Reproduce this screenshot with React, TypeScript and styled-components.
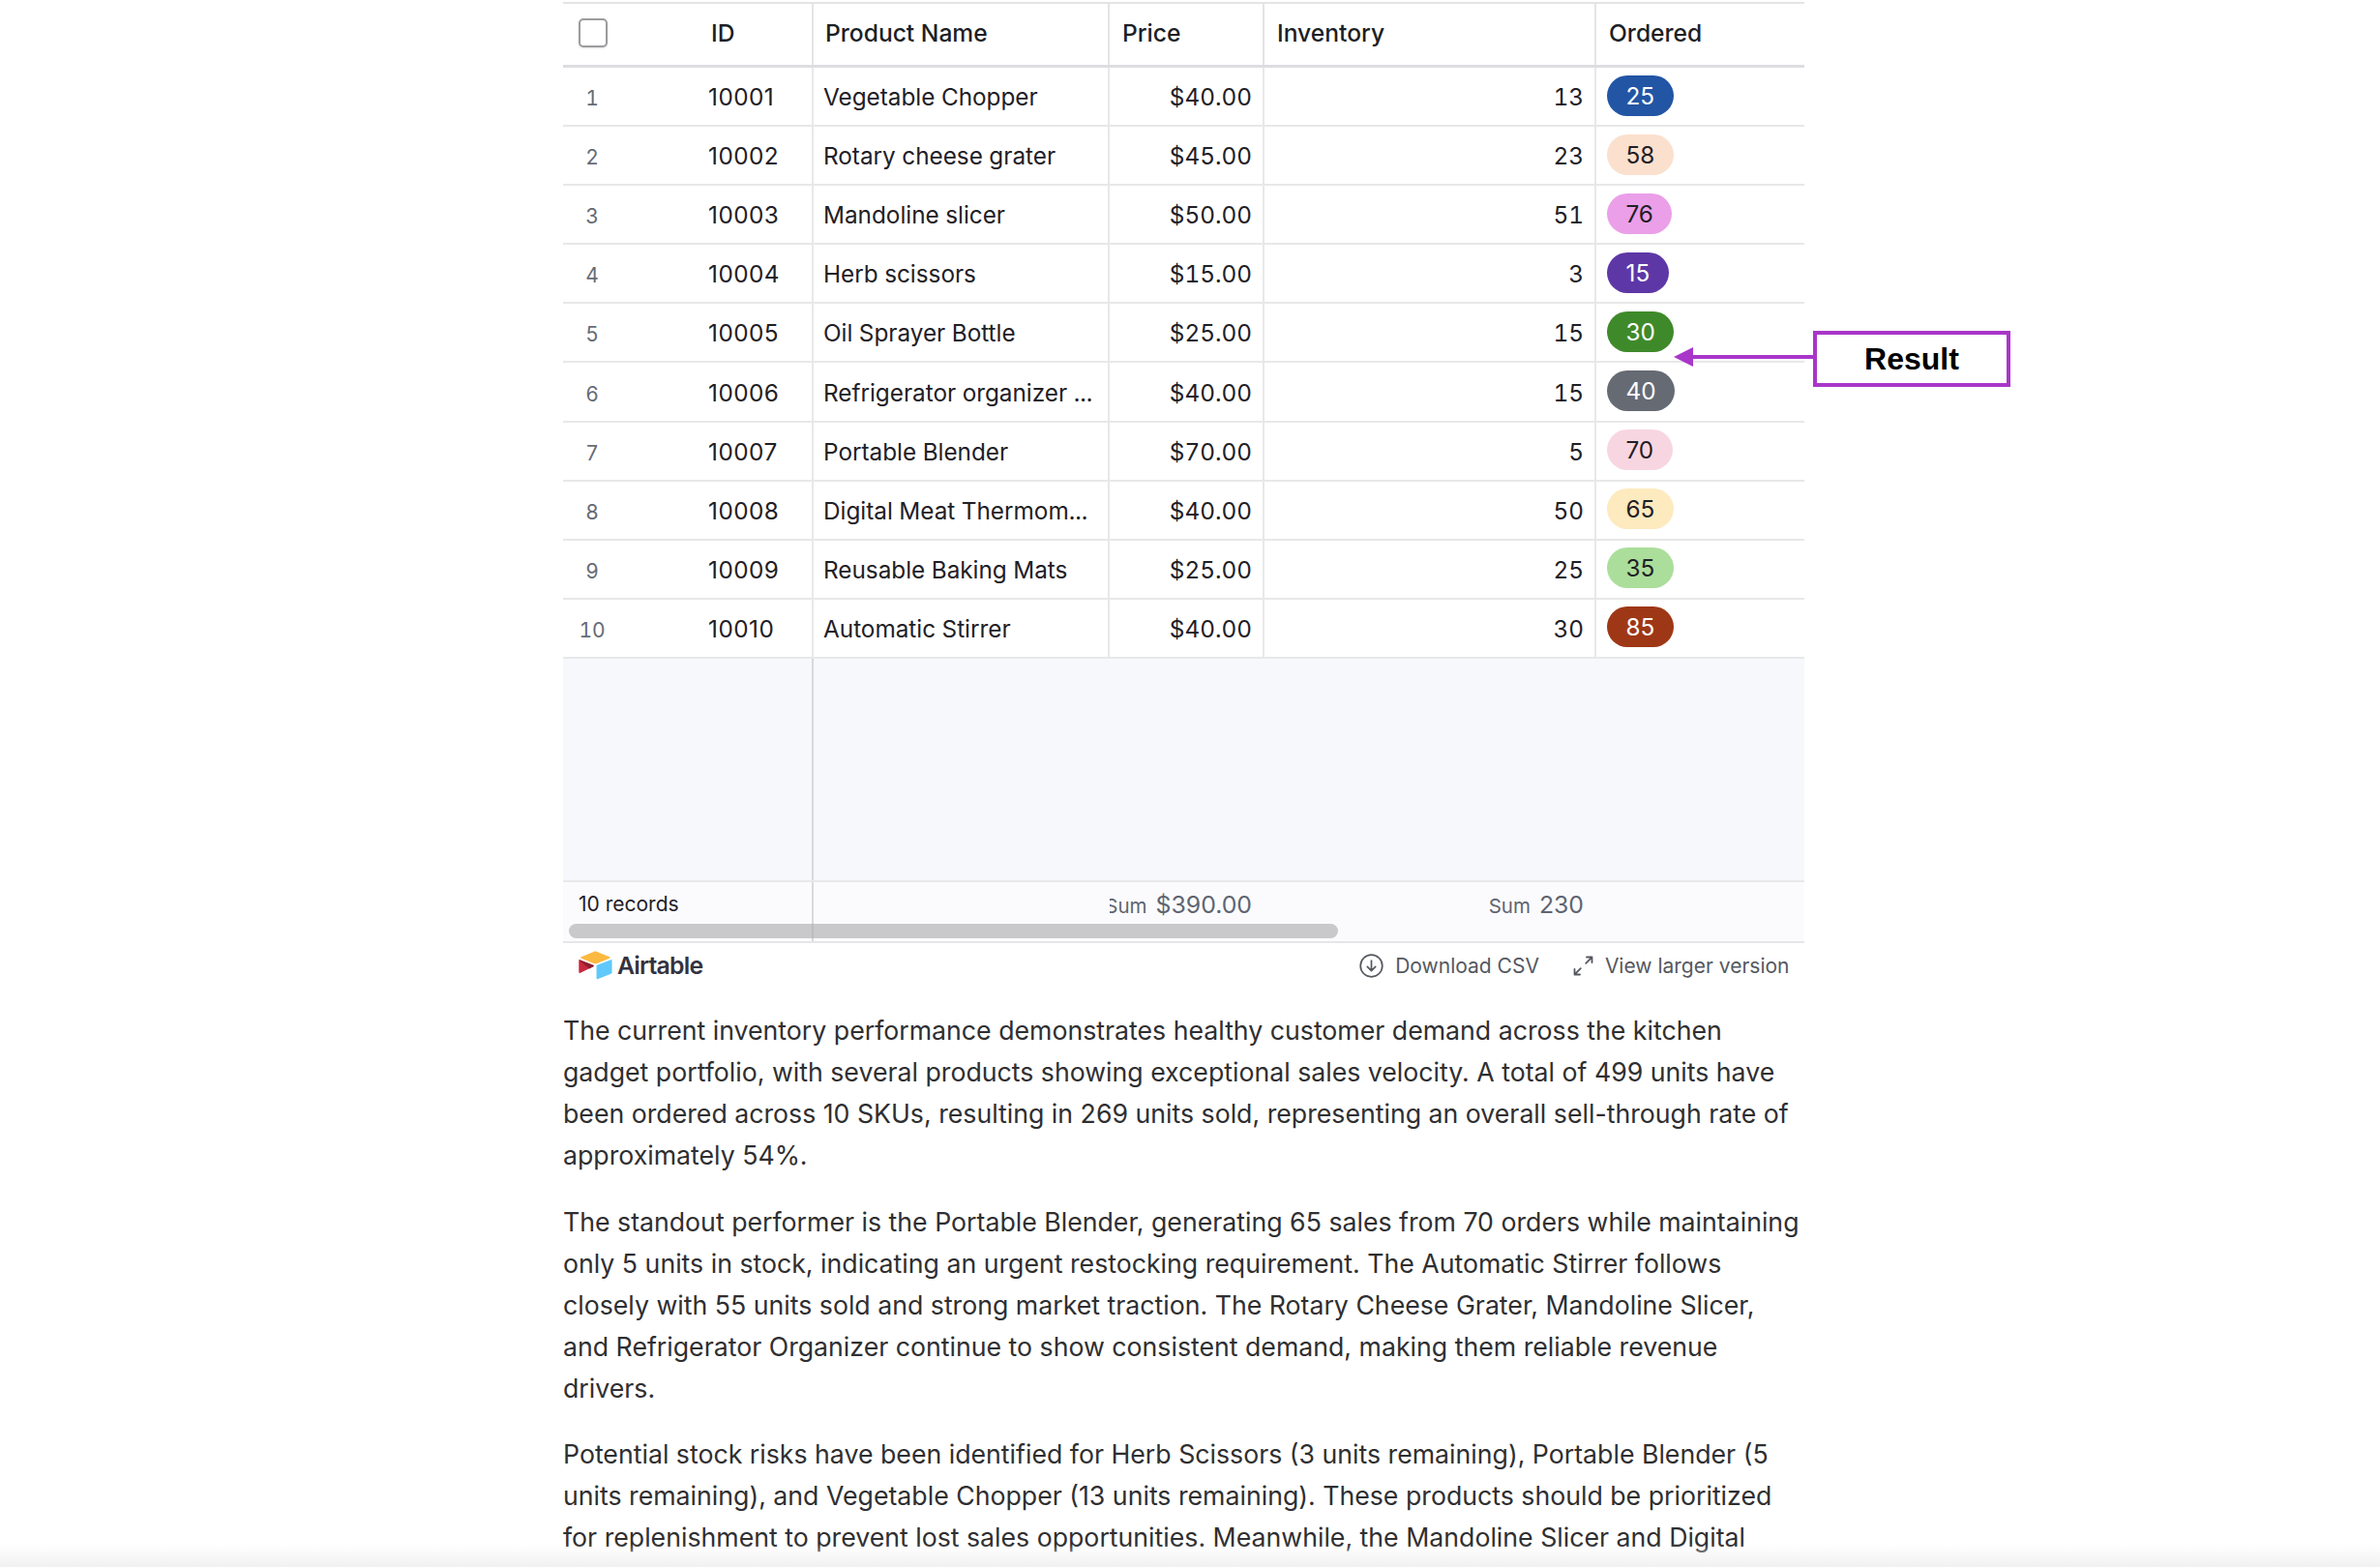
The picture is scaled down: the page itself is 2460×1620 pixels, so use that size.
import React from "react";
import styled, { createGlobalStyle } from "styled-components";

const Global = createGlobalStyle`
  html, body { margin: 0; padding: 0; background: #fff; }
  * { box-sizing: border-box; }
`;

const COLS = "138px 121px 306px 160px 343px 215px";

const Page = styled.div`
  position: relative;
  width: 2460px;
  height: 1620px;
  overflow: hidden;
  padding: 2px 0 0 582px;
  font-family: Inter, "Liberation Sans", sans-serif;
  background: #fff;
`;
const Content = styled.div`
  width: 1283px;
`;
const Table = styled.div`
  border-top: 2px solid #e4e4e6;
  display: flex;
  flex-direction: column;
`;
const HeaderRow = styled.div`
  display: grid;
  grid-template-columns: ${COLS};
  height: 66px;
  border-bottom: 3px solid #dddde0;
`;
const HeaderCell = styled.div<{ $pad?: number; $line?: boolean }>`
  display: flex;
  align-items: center;
  padding-left: ${(p) => p.$pad ?? 14}px;
  padding-bottom: 4px;
  font-size: 24.6px;
  font-weight: 500;
  color: #1d1f25;
  border-right: ${(p) => (p.$line ? "2px solid #e4e4e6" : "none")};
`;
const CheckBox = styled.span`
  width: 30px;
  height: 30px;
  border: 2px solid #9c9c9f;
  border-radius: 5px;
  background: #fff;
  box-shadow: 0 1px 2px rgba(0, 0, 0, 0.12);
`;
const Row = styled.div`
  display: grid;
  grid-template-columns: ${COLS};
  height: 61.1px;
  border-bottom: 2px solid #e8e8ea;
`;
const Cell = styled.div<{ $line?: boolean; $right?: number; $pad?: number }>`
  display: flex;
  align-items: center;
  justify-content: ${(p) => (p.$right ? "flex-end" : "flex-start")};
  padding-left: ${(p) => (p.$right ? 0 : p.$pad ?? 12)}px;
  padding-right: ${(p) => p.$right ?? 0}px;
  padding-top: 1px;
  font-size: 24.3px;
  font-variant-numeric: tabular-nums;
  color: #1f2026;
  white-space: nowrap;
  overflow: hidden;
  border-right: ${(p) => (p.$line ? "2px solid #e8e8ea" : "none")};
`;
const IdCell = styled(Cell)`
  font-variant-numeric: normal;
  letter-spacing: 0.5px;
`;
const RowNumber = styled.span`
  width: 60px;
  padding-top: 3px;
  text-align: center;
  font-size: 21px;
  color: #666b76;
`;
const Pill = styled.span<{ $bg: string; $fg: string }>`
  display: inline-flex;
  align-items: center;
  justify-content: center;
  height: 42px;
  padding: 0 19.5px;
  border-radius: 21px;
  margin-top: -3px;
  font-size: 24.3px;
  font-variant-numeric: normal;
  background: ${(p) => p.$bg};
  color: ${(p) => p.$fg};
`;
const Empty = styled.div`
  display: grid;
  grid-template-columns: 259px 1fr;
  height: 231px;
  background: #f7f8fc;
  border-bottom: 2px solid #e8e8ea;
`;
const FrozenPane = styled.div`
  border-right: 2px solid #d9d9dc;
`;
const Footer = styled.div`
  position: relative;
  display: grid;
  grid-template-columns: ${COLS};
  height: 63px;
  background: #fbfbfd;
  border-bottom: 2px solid #e6e6e8;
`;
const FootCell = styled.div<{ $span?: number; $line?: boolean; $right?: number }>`
  grid-column: span ${(p) => p.$span ?? 1};
  display: flex;
  justify-content: flex-end;
  align-items: baseline;
  gap: 9px;
  padding: 8px ${(p) => p.$right ?? 13}px 0 0;
  overflow: hidden;
  white-space: nowrap;
  border-right: ${(p) => (p.$line ? "2px solid #d9d9dc" : "none")};
`;
const Records = styled(FootCell)`
  justify-content: flex-start;
  padding-left: 16px;
  padding-top: 10px;
  font-size: 21px;
  color: #1f2026;
`;
const SumLabel = styled.span`
  font-size: 20.5px;
  color: #5f6470;
`;
const SumValue = styled.span`
  font-size: 24.8px;
  color: #5f6470;
`;
const Scrollbar = styled.div`
  position: absolute;
  left: 6px;
  top: 43px;
  width: 795px;
  height: 15px;
  border-radius: 8px;
  background: rgba(170, 170, 172, 0.62);
`;
const Toolbar = styled.div`
  display: flex;
  align-items: center;
  justify-content: space-between;
  height: 49px;
  padding: 0 15.5px 2px 16px;
`;
const Brand = styled.div`
  display: flex;
  align-items: center;
  gap: 5px;
`;
const BrandName = styled.span`
  font-size: 24.8px;
  font-weight: 600;
  letter-spacing: -0.8px;
  color: #33333f;
`;
const Actions = styled.div`
  display: flex;
  align-items: center;
  gap: 35px;
`;
const Action = styled.span`
  display: inline-flex;
  align-items: center;
  gap: 12px;
  font-size: 21px;
  color: #55585f;
`;
const Article = styled.div`
  padding-top: 20.5px;
`;
const Paragraph = styled.p`
  margin: 0 0 25.5px;
  font-size: 26.7px;
  line-height: 43px;
  color: #2f2f31;
`;
const Callout = styled.div`
  position: absolute;
  left: 1874px;
  top: 342px;
  width: 204px;
  height: 58px;
  border: 4.5px solid #a936c9;
  display: flex;
  align-items: center;
  justify-content: center;
  font-family: "Liberation Sans", Arial, sans-serif;
  font-weight: 700;
  font-size: 32px;
  color: #000;
  background: #fff;
`;
const CalloutArrow = styled.svg`
  position: absolute;
  left: 1730px;
  top: 359px;
`;
const BottomFade = styled.div`
  position: absolute;
  left: 0;
  right: 0;
  bottom: 0;
  height: 24px;
  background: linear-gradient(to bottom, rgba(240, 240, 240, 0), #f1f1f1);
`;

type RowData = [number, string, string, string, number, number, string, string];
const rows: RowData[] = [
  [1, "10001", "Vegetable Chopper", "$40.00", 13, 25, "#2255a4", "#fff"],
  [2, "10002", "Rotary cheese grater", "$45.00", 23, 58, "#fbe0ce", "#1f2026"],
  [3, "10003", "Mandoline slicer", "$50.00", 51, 76, "#eb9fe8", "#1f2026"],
  [4, "10004", "Herb scissors", "$15.00", 3, 15, "#5e37a6", "#fff"],
  [5, "10005", "Oil Sprayer Bottle", "$25.00", 15, 30, "#3e8a2a", "#fff"],
  [6, "10006", "Refrigerator organizer ...", "$40.00", 15, 40, "#666a73", "#fff"],
  [7, "10007", "Portable Blender", "$70.00", 5, 70, "#f8d6e1", "#1f2026"],
  [8, "10008", "Digital Meat Thermom...", "$40.00", 50, 65, "#feeabf", "#1f2026"],
  [9, "10009", "Reusable Baking Mats", "$25.00", 25, 35, "#abde9b", "#1f2026"],
  [10, "10010", "Automatic Stirrer", "$40.00", 30, 85, "#9e3715", "#fff"],
];

const AirtableLogo = () => (
  <svg width="35" height="30" viewBox="0 0 200 170" aria-hidden="true">
    <path fill="#fcb93f" d="M89 4.8L16.2 34.9c-4.1 1.7-4 7.4.1 9.1l73.2 29c6.4 2.6 13.6 2.6 20 0l73.2-29c4.1-1.6 4.1-7.4.1-9.1l-73-30.1C103.2 2 95.7 2 89 4.8" />
    <path fill="#5fc9fb" d="M105.9 88.9v72.5c0 3.4 3.5 5.8 6.7 4.5l81.6-31.7c1.9-.7 3.1-2.5 3.1-4.5V56.2c0-3.4-3.5-5.8-6.7-4.5L109 83.4c-1.9.8-3.1 2.6-3.1 4.5" />
    <path fill="#c8283f" d="M86.9 92.6l-24.2 11.7-2.5 1.2L9.1 130c-3.2 1.6-7.4-.8-7.4-4.4V57.5c0-1.3.7-2.4 1.6-3.3.4-.4.8-.7 1.2-.9 1.2-.7 3-.9 4.4-.3l77.5 30.7c4 1.5 4.3 7.1.5 8.9" />
    <path fill="#8e1d2e" d="M86.9 92.6l-24.2 11.7-59.4-50c.4-.4.8-.7 1.2-.9 1.2-.7 3-.9 4.4-.3l77.5 30.7c4 1.6 4.3 7.2.5 8.8" />
  </svg>
);

const DownloadIcon = () => (
  <svg width="25" height="25" viewBox="0 0 25 25" fill="none" stroke="#55585f" strokeWidth="1.7" strokeLinecap="round" strokeLinejoin="round" aria-hidden="true">
    <circle cx="12.5" cy="12.5" r="11.3" />
    <path d="M12.5 7v10.5M8.3 13.4l4.2 4.2 4.2-4.2" />
  </svg>
);

const ExpandIcon = () => (
  <svg width="21" height="21" viewBox="0 0 21 21" fill="none" stroke="#55585f" strokeWidth="1.8" strokeLinecap="round" strokeLinejoin="round" aria-hidden="true">
    <path d="M14 1.5h5.5V7M19.2 1.8l-6 6" />
    <path d="M1.5 14v5.5H7M1.8 19.2l6-6" />
  </svg>
);

export default function App() {
  return (
    <Page>
      <Global />
      <Content>
        <Table>
          <HeaderRow>
            <HeaderCell $pad={16}>
              <CheckBox />
            </HeaderCell>
            <HeaderCell $line $pad={15}>ID</HeaderCell>
            <HeaderCell $line $pad={12}>Product Name</HeaderCell>
            <HeaderCell $line $pad={13}>Price</HeaderCell>
            <HeaderCell $line $pad={13}>Inventory</HeaderCell>
            <HeaderCell $pad={13}>Ordered</HeaderCell>
          </HeaderRow>
          {rows.map(([n, id, name, price, inv, ordered, bg, fg]) => (
            <Row key={id}>
              <Cell $pad={0}>
                <RowNumber>{n}</RowNumber>
              </Cell>
              <IdCell $line $pad={12}>{id}</IdCell>
              <Cell $line $pad={10}>{name}</Cell>
              <Cell $line $right={11}>{price}</Cell>
              <Cell $line $right={11}>{inv}</Cell>
              <Cell $pad={11}>
                <Pill $bg={bg} $fg={fg}>{ordered}</Pill>
              </Cell>
            </Row>
          ))}
          <Empty>
            <FrozenPane />
          </Empty>
          <Footer>
            <Records $span={2} $line>10 records</Records>
            <FootCell />
            <FootCell $right={13}>
              <SumLabel>Sum</SumLabel>
              <SumValue>$390.00</SumValue>
            </FootCell>
            <FootCell $right={13}>
              <SumLabel>Sum</SumLabel>
              <SumValue>230</SumValue>
            </FootCell>
            <FootCell />
            <Scrollbar />
          </Footer>
        </Table>
        <Toolbar>
          <Brand>
            <AirtableLogo />
            <BrandName>Airtable</BrandName>
          </Brand>
          <Actions>
            <Action>
              <DownloadIcon />
              Download CSV
            </Action>
            <Action>
              <ExpandIcon />
              View larger version
            </Action>
          </Actions>
        </Toolbar>
        <Article>
          <Paragraph>
            The current inventory performance demonstrates healthy customer demand across the kitchen gadget portfolio, with several products showing exceptional sales velocity. A total of 499 units have been ordered across 10 SKUs, resulting in 269 units sold, representing an overall sell-through rate of approximately 54%.
          </Paragraph>
          <Paragraph>
            The standout performer is the Portable Blender, generating 65 sales from 70 orders while maintaining only 5 units in stock, indicating an urgent restocking requirement. The Automatic Stirrer follows closely with 55 units sold and strong market traction. The Rotary Cheese Grater, Mandoline Slicer, and Refrigerator Organizer continue to show consistent demand, making them reliable revenue drivers.
          </Paragraph>
          <Paragraph>
            Potential stock risks have been identified for Herb Scissors (3 units remaining), Portable Blender (5 units remaining), and Vegetable Chopper (13 units remaining). These products should be prioritized for replenishment to prevent lost sales opportunities. Meanwhile, the Mandoline Slicer and Digital
          </Paragraph>
        </Article>
      </Content>
      <CalloutArrow width="146" height="20" viewBox="0 0 146 20" aria-hidden="true">
        <path d="M0 10L20 0v20z" fill="#a936c9" />
        <path d="M18 10h128" stroke="#a936c9" strokeWidth="4" />
      </CalloutArrow>
      <Callout>Result</Callout>
      <BottomFade />
    </Page>
  );
}
